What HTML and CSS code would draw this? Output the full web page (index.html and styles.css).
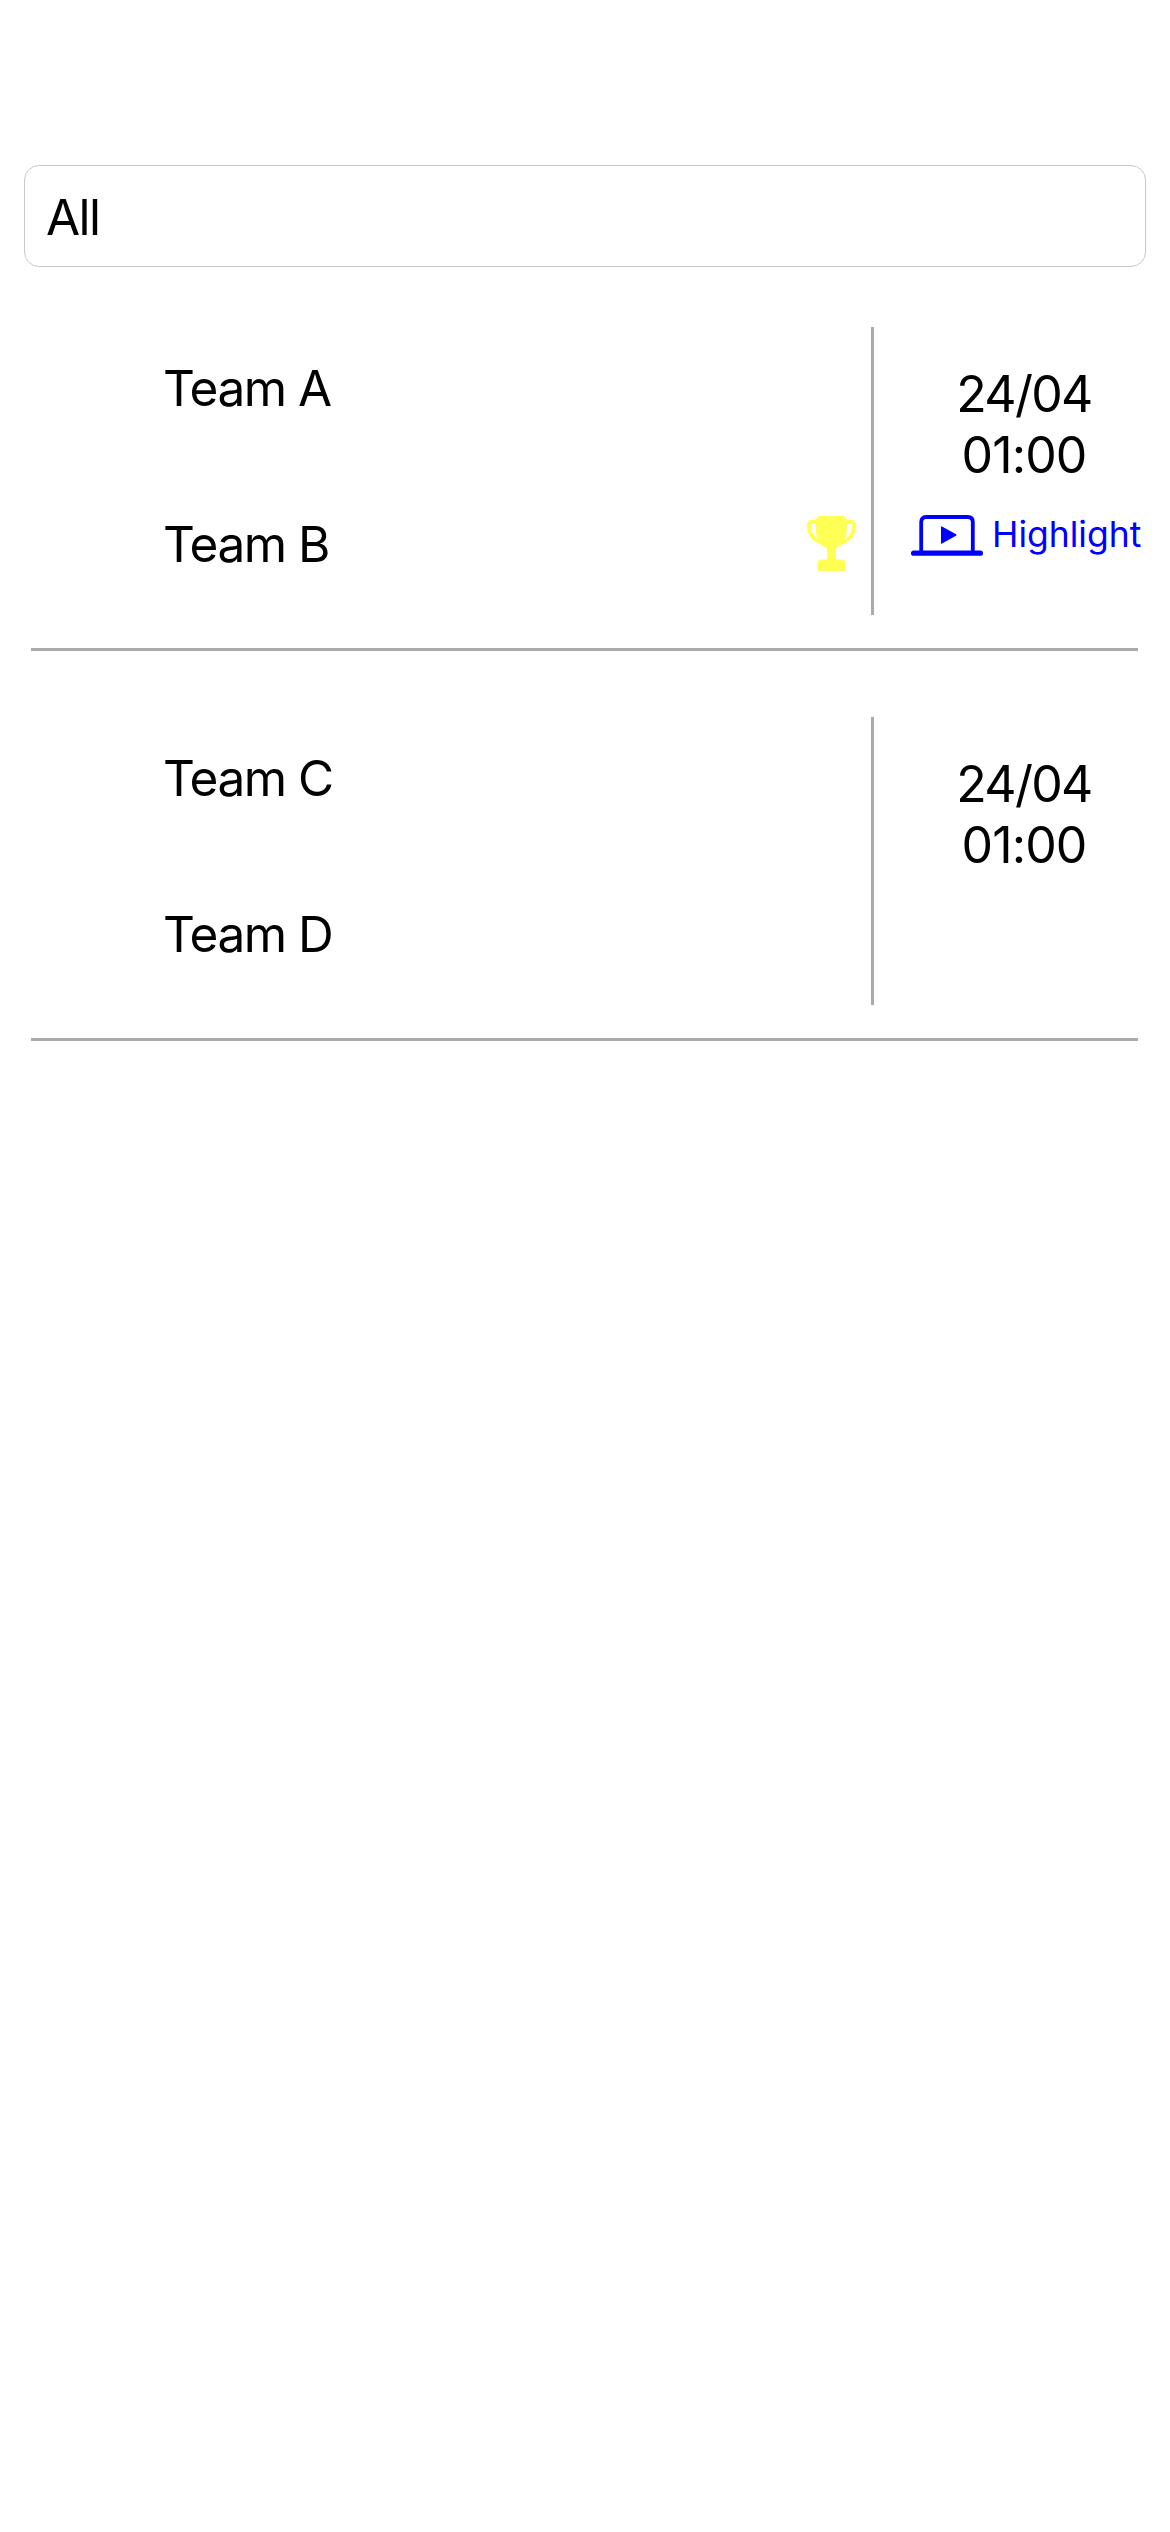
FILE: index.html
```html
<!DOCTYPE html>
<html lang="en">
<head>
<meta charset="utf-8">
<title>Matches</title>
<link rel="stylesheet" href="styles.css">
</head>
<body>
<main class="screen">
  <div class="filter"><span class="filter-text">All</span></div>
  <section class="match">
    <div class="match-row">
      <div class="teams">
        <div class="team"><span class="name name-a">Team A</span></div>
        <div class="team"><span class="name name-b">Team B</span>
          <svg class="trophy" viewBox="0 0 49 55" fill="none">
            <path d="M11 6H4.500Q2 6 2 9C2 18 7 25 16 27" stroke="#ffff54" stroke-width="4"/>
            <path d="M38 6H44.500Q47 6 47 9C47 18 42 25 33 27" stroke="#ffff54" stroke-width="4"/>
            <path d="M13 0H35.500Q39 0 39.500 4C41 15 39 22 35.500 27Q33 30.500 29 32.500V43.500H34.500Q38.500 43.500 38.500 47.500V53Q38.500 55 36.500 55H12.500Q10.500 55 10.500 53V47.500Q10.500 43.500 14.500 43.500H20V32.500Q15.500 30.500 13 27C9.500 22 7.800 15 9 4Q9.500 0 13 0Z" fill="#ffff54"/>
          </svg>
        </div>
      </div>
      <div class="info">
        <div class="date">24/04</div>
        <div class="time">01:00</div>
        <a class="highlight">
          <svg class="laptop" viewBox="0 0 72 41">
            <path d="M10.200 37V7Q10.200 2 15.200 2H56.800Q61.800 2 61.800 7V37" fill="none" stroke="#00f" stroke-width="3.800"/>
            <rect x="0" y="35.500" width="72" height="5.300" rx="2.650" fill="#00f"/>
            <path d="M31 11.500L45 19.200Q46.200 20 45 20.800L31 28.600Q30 29 30 28V12Q30 11 31 11.500Z" fill="#00f"/>
          </svg>
          <span class="highlight-text">Highlight</span>
        </a>
      </div>
    </div>
  </section>
  <section class="match">
    <div class="match-row">
      <div class="teams">
        <div class="team"><span class="name name-c">Team C</span></div>
        <div class="team"><span class="name name-d">Team D</span></div>
      </div>
      <div class="info">
        <div class="date">24/04</div>
        <div class="time">01:00</div>
      </div>
    </div>
  </section>
</main>
</body>
</html>
```
FILE: styles.css
```css
* { box-sizing: border-box; }
body { margin: 0; background: #fff; color: #000; font-family: Inter, "Liberation Sans", sans-serif; }
.screen { width: 1170px; min-height: 2532px; padding-top: 165px; }
.filter {
  height: 102px;
  margin: 0 24px 60px;
  padding-left: 21px;
  border: 1px solid #c8c8c8;
  border-radius: 15px;
  font-size: 49.5px;
  line-height: 103px;
}
.filter-text { letter-spacing: -1.6px; }
.match {
  height: 324px;
  margin: 0 32px 66px 31px;
  border-bottom: 3px solid #aaa;
}
.match-row { display: flex; height: 288px; margin-right: -32px; }
.teams { width: 843px; padding: 13px 15px 0 132px; border-right: 3px solid #aaa; }
.team {
  display: flex;
  justify-content: space-between;
  align-items: center;
  height: 96px;
  margin-bottom: 60px;
  font-size: 49.5px;
  line-height: 96px;
}
.name { letter-spacing: -1.5px; }
.trophy { width: 49px; height: 55px; margin-top: -1px; }
.info {
  flex: 1;
  display: flex;
  flex-direction: column;
  padding: 37px 0 0 37px;
  font-size: 50px;
  line-height: 61px;
}
.date, .time { width: 226px; text-align: center; letter-spacing: -0.9px; }
.date { font-feature-settings: "calt" 0; letter-spacing: -1.7px; }
.highlight {
  display: flex;
  align-items: center;
  gap: 9px;
  height: 44px;
  margin-top: 27px;
  color: #00f;
  font-size: 35.5px;
  line-height: 44px;
}
.laptop { width: 72px; height: 41px; flex: none; margin-top: 1px; }
.highlight-text { white-space: nowrap; }
```
